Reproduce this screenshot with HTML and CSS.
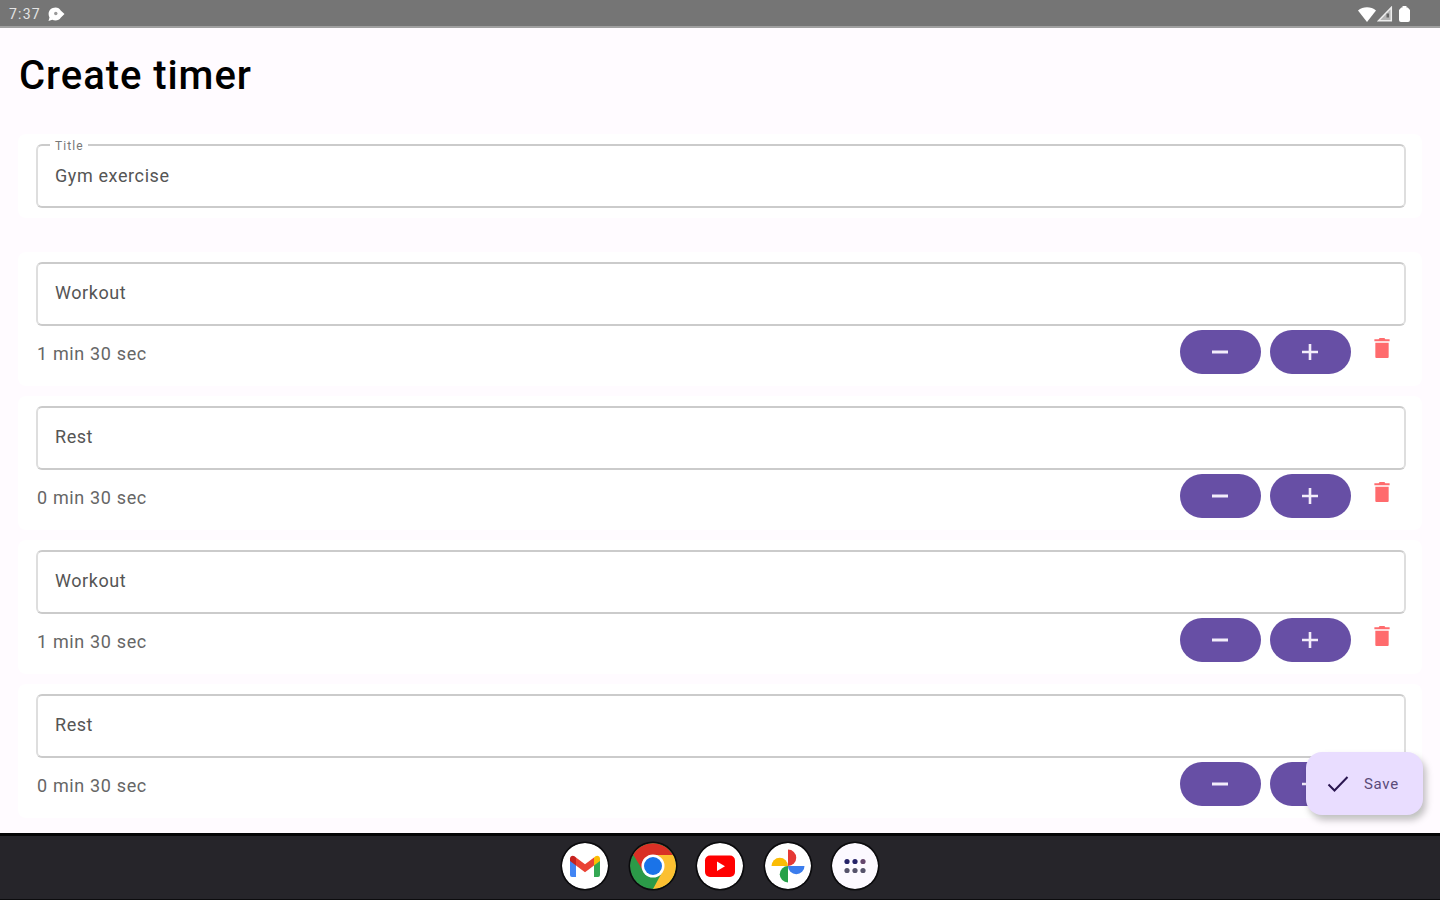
FILE: index.html
```html
<!DOCTYPE html>
<html lang="en">
<head>
  <meta charset="UTF-8" />
  <meta name="viewport" content="width=device-width, initial-scale=1.0"/>
  <title>Create timer</title>
  <link rel="stylesheet" href="styles.css">
</head>
<body>

<svg class="sprite" width="0" height="0">
  <symbol id="minus" viewBox="0 0 24 24"><path d="M4 10.5h16v3H4z"/></symbol>
  <symbol id="plus" viewBox="0 0 24 24"><path d="M10.7 4h2.6v6.7H20v2.6h-6.7V20h-2.6v-6.7H4v-2.6h6.7z"/></symbol>
  <symbol id="trash" viewBox="0 0 16 21"><path d="M1 5h14v15a1 1 0 0 1-1 1H2a1 1 0 0 1-1-1zM0 1.200h4.500L5.500 0h5l1 1.200H16v2.200H0z"/></symbol>
</svg>

<div class="screen">
  <header class="status-bar">
    <div class="status-left">
      <span class="clock">7:37</span>
      <svg width="17" height="15" viewBox="0 0 17 15">
        <path fill="#fff" d="M7.500 0.500c2.500 0 4.200 1.200 5.200 3L16.500 7l-3.800 3.800c-1 1.800-3 2.700-5.200 2.700-1.300 0-2.300-.2-3.200-.7L.5 14l1-3.600C.9 9.400.6 8.300.6 7 .6 3.300 3.600.5 7.500.5z"/>
        <circle cx="7.800" cy="6.500" r="1.700" fill="#999"/>
      </svg>
    </div>
    <div class="status-right">
      <svg width="18" height="15" viewBox="0 0 18 15"><path fill="#fff" d="M0 3.500C5-.8 13-.8 18 3.500L9 15z"/></svg>
      <svg width="16" height="16" viewBox="0 0 16 16"><path fill="#b4b4b4" stroke="#eee" stroke-width="1.500" d="M1.500 14.700 14.300 1.500v13.200z"/><path fill="#666" d="M9.500 7.500h2.500v4H9.500z"/></svg>
      <svg class="battery" width="11" height="16" viewBox="0 0 11 16"><path fill="#fff" d="M3.500 0h4v1.500h1.200L11 4v10a2 2 0 0 1-2 2H2a2 2 0 0 1-2-2V4l2.300-2.500h1.200z"/></svg>
    </div>
  </header>

  <main class="content">
    <h1>Create timer</h1>

    <section class="card title-card">
      <div class="field">
        <span class="field-label">Title</span>
        <span>Gym exercise</span>
      </div>
    </section>

    <section class="card">
      <div class="field"><span>Workout</span></div>
      <div class="controls">
        <span class="duration">1 min 30 sec</span>
        <button class="pill" aria-label="Less"><svg><use href="#minus"/></svg></button>
        <button class="pill" aria-label="More"><svg><use href="#plus"/></svg></button>
        <button class="delete" aria-label="Delete"><svg><use href="#trash"/></svg></button>
      </div>
    </section>

    <section class="card">
      <div class="field"><span>Rest</span></div>
      <div class="controls">
        <span class="duration">0 min 30 sec</span>
        <button class="pill" aria-label="Less"><svg><use href="#minus"/></svg></button>
        <button class="pill" aria-label="More"><svg><use href="#plus"/></svg></button>
        <button class="delete" aria-label="Delete"><svg><use href="#trash"/></svg></button>
      </div>
    </section>

    <section class="card">
      <div class="field"><span>Workout</span></div>
      <div class="controls">
        <span class="duration">1 min 30 sec</span>
        <button class="pill" aria-label="Less"><svg><use href="#minus"/></svg></button>
        <button class="pill" aria-label="More"><svg><use href="#plus"/></svg></button>
        <button class="delete" aria-label="Delete"><svg><use href="#trash"/></svg></button>
      </div>
    </section>

    <section class="card">
      <div class="field"><span>Rest</span></div>
      <div class="controls">
        <span class="duration">0 min 30 sec</span>
        <button class="pill" aria-label="Less"><svg><use href="#minus"/></svg></button>
        <button class="pill" aria-label="More"><svg><use href="#plus"/></svg></button>
        <button class="delete" aria-label="Delete"><svg><use href="#trash"/></svg></button>
      </div>
    </section>

    <button class="save">
      <svg width="22" height="18" viewBox="0 0 22 18"><path fill="none" stroke="#2a1650" stroke-width="2" d="M1.500 9.500 7.500 15.500 20.500 2"/></svg>
      <span>Save</span>
    </button>
  </main>

  <nav class="taskbar">
    <!-- Gmail -->
    <svg class="app" viewBox="0 0 46 46">
      <circle cx="23" cy="23" r="23" fill="#fff"/>
      <path fill="#4285f4" d="M8 16l6 4.500V34H10a2 2 0 0 1-2-2z"/>
      <path fill="#34a853" d="M32 20.500 38 16v16a2 2 0 0 1-2 2h-4z"/>
      <path fill="#fbbc04" d="M32 14.500l1.500-1.200c2-1.400 4.500 0 4.500 2.200V18l-6 4.500z"/>
      <path fill="#c5221f" d="M8 15.500c0-2.200 2.500-3.600 4.500-2.200l1.500 1.200v8L8 18z"/>
      <path fill="#ea4335" d="M14 14.500l9 6.800 9-6.800v8L23 29.300l-9-6.800z"/>
    </svg>
    <!-- Chrome -->
    <svg class="app" viewBox="0 0 46 46">
      <circle cx="23" cy="23" r="23" fill="#2b9a48"/>
      <path fill="#fcc031" d="M23 12h20.200A23 23 0 0 1 23 46L32.500 28.500z"/>
      <path fill="#d93025" d="M3.100 11.500A23 23 0 0 1 42.900 12H23L13.500 28.500z"/>
      <circle cx="23" cy="23" r="11.500" fill="#fff"/>
      <circle cx="23" cy="23" r="9" fill="#1a73e8"/>
    </svg>
    <!-- YouTube -->
    <svg class="app" viewBox="0 0 46 46">
      <circle cx="23" cy="23" r="23" fill="#fff"/>
      <rect x="8" y="12.500" width="30" height="21.500" rx="5" fill="#f00"/>
      <path fill="#fff" d="M20 18.500v9.500l8-4.750z"/>
    </svg>
    <!-- Photos -->
    <svg class="app" viewBox="0 0 46 46">
      <circle cx="23" cy="23" r="23" fill="#fff"/>
      <path fill="#e53935" d="M23 6.500a8.200 8.200 0 0 1 0 16.500z"/>
      <path fill="#3b7ded" d="M39.500 23a8.200 8.200 0 0 1-16.500 0z"/>
      <path fill="#26a148" d="M23 39.500A8.200 8.200 0 0 1 23 23z"/>
      <path fill="#fbbc04" d="M6.500 23A8.200 8.200 0 0 1 23 23z"/>
    </svg>
    <!-- All apps -->
    <svg class="app" viewBox="0 0 46 46">
      <circle cx="23" cy="23" r="23" fill="#fcf9ff"/>
      <g fill="#252268"><circle cx="15" cy="18.500" r="2.600"/><circle cx="23" cy="18.500" r="2.600"/></g>
      <circle cx="31" cy="18.500" r="2.600" fill="#65466d"/>
      <g fill="#55536b"><circle cx="15" cy="27.500" r="2.600"/><circle cx="23" cy="27.500" r="2.600"/><circle cx="31" cy="27.500" r="2.600"/></g>
    </svg>
  </nav>
</div>

</body>
</html>
```
FILE: styles.css
```css
* {
  box-sizing: border-box;
}

body {
  margin: 0;
  font-family: Roboto, sans-serif;
  background: #fffbff;
  color: #000;
  overflow: hidden;
}

.sprite {
  position: absolute;
}

.screen {
  display: flex;
  flex-direction: column;
  height: 900px;
}

.status-bar {
  display: flex;
  justify-content: space-between;
  height: 28px;
  padding: 0 30px 0 9px;
  background: #757575;
  border-bottom: 2px solid #a0a0a0;
}

.status-left, .status-right {
  display: flex;
  align-items: center;
  height: 28px;
}

.status-left {
  gap: 7px;
}

.clock {
  color: #e4e4e4;
  font-size: 14px;
  letter-spacing: 1.2px;
}

.status-right {
  gap: 2px;
}

.status-right svg:first-child {
  margin-right: -1px;
}

.battery {
  margin-left: 4px;
}

.content {
  position: relative;
  flex: 1;
  min-height: 0;
  padding: 0 18px;
  overflow: hidden;
}

h1 {
  height: 106px;
  margin: 0;
  padding: 24px 0 0 1px;
  font-size: 40px;
  font-weight: 500;
  line-height: 48px;
  letter-spacing: 0.95px;
}

.card {
  height: 134px;
  margin-bottom: 10px;
  padding: 10px 16px 0 18px;
  border-radius: 8px;
  background: #fff;
}

.title-card {
  height: 84px;
  margin-bottom: 34px;
}

.field {
  position: relative;
  display: flex;
  align-items: center;
  height: 64px;
  padding: 0 17px 3px;
  border: 2px solid #cbcbcb;
  border-left-color: #dedede;
  border-right-color: #dedede;
  border-radius: 6px;
  color: #555;
  font-size: 18px;
  letter-spacing: 0.55px;
}

.title-card .field {
  padding-bottom: 1px;
  letter-spacing: 0.6px;
}

/* floats over the top border of the field */
.field-label {
  position: absolute;
  top: -7px;
  left: 12px;
  padding: 0 4px 0 5px;
  background: #fff;
  color: #777;
  font-size: 12px;
  line-height: 14px;
  letter-spacing: 1.1px;
}

.controls {
  display: flex;
  align-items: flex-start;
  padding-top: 4px;
}

.duration {
  flex: 1;
  padding-left: 1px;
  color: #666;
  font-size: 18px;
  line-height: 47px;
  letter-spacing: 0.65px;
}

button {
  border: none;
  font-family: inherit;
}

.pill {
  display: flex;
  align-items: center;
  justify-content: center;
  width: 81px;
  height: 44px;
  margin-right: 9px;
  padding: 0;
  border-radius: 22px;
  background: #674fa5;
}

.pill svg {
  width: 24px;
  height: 24px;
  fill: #f3edfa;
}

.delete {
  height: 20px;
  margin: 8px 16px 0 14.5px;
  padding: 0;
  background: none;
}

.delete svg {
  display: block;
  width: 16px;
  height: 20px;
  fill: #ff6b6d;
}

.save {
  position: absolute;
  right: 17px;
  bottom: 18px;
  display: flex;
  align-items: center;
  gap: 15px;
  width: 117px;
  height: 63px;
  padding: 0 0 0 21px;
  border-radius: 16px;
  background: #e9ddff;
  box-shadow: 3px 5px 7px rgba(0, 0, 0, 0.25);
  color: #5b4b78;
  font-size: 15px;
  font-weight: 400;
  letter-spacing: 0.7px;
}

.taskbar {
  display: flex;
  align-items: center;
  justify-content: center;
  gap: 21.500px;
  height: 67px;
  padding-bottom: 3px;
  border-top: 3px solid #050506;
  border-bottom: 1px solid #0c0c0e;
  background: #26252a;
}

.app {
  width: 46px;
  height: 46px;
  border-radius: 50%;
  box-shadow: 0 0 0 1.500px #0b0b0d;
}
```
